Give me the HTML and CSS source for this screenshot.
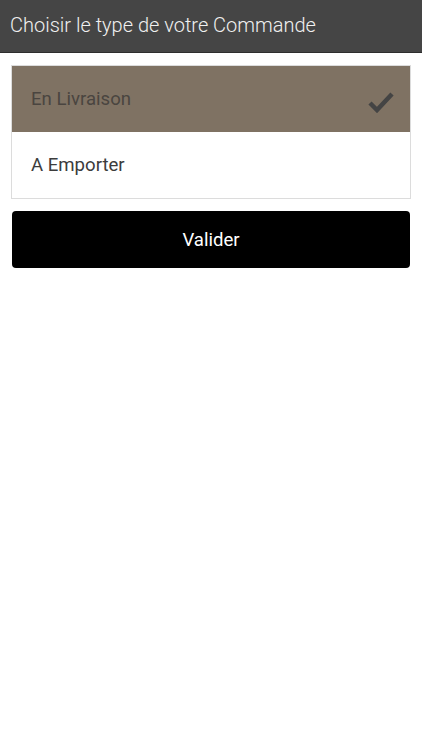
FILE: index.html
```html
<!doctype html>
<html>
	<head>
		<meta charset="utf-8">
		<title>Type de commande</title>
		<link rel="stylesheet" href="styles.css">
	</head>
	<body>
		<div id="header">
			<p id="title">Choisir le type de votre Commande</p>
		</div>
		<div id="content">
			<div id="choices">
				<div class="choice selected">
					<span>En Livraison</span>
					<svg class="check" width="26" height="22" viewBox="0 0 26 22"><path d="M2 12 L9 19 L24 3" fill="none" stroke="#444" stroke-width="4.5"/></svg>
				</div>
				<div class="choice">
					<span>A Emporter</span>
				</div>
			</div>
			<div id="valider">Valider</div>
		</div>
	</body>
</html>
```
FILE: styles.css
```css
*{
	margin:0;
	padding:0;
	box-sizing:border-box;
}
body{
	width:422px;
	height:750px;
	background-color:white;
	font-family:Roboto, "Liberation Sans", sans-serif;
}
#header{
	height:53px;
	background-color:#454545;
	border-bottom:1px solid #2e2e2e;
	display:flex;
	align-items:center;
	padding-left:10px;
}
#title{
	font-size:20px;
	font-weight:300;
	color:#f0f0f0;
	padding-bottom:3px;
}
#content{
	padding:12px 11px 0 11px;
	display:flex;
	flex-direction:column;
	gap:12px;
}
#choices{
	border:1px solid #dcdcdc;
}
.choice{
	height:66px;
	display:flex;
	align-items:center;
	justify-content:space-between;
	padding:0 16px 0 19px;
	font-size:18.6px;
	color:#3c3c3c;
}
.choice.selected{
	background-color:#7f7263;
	color:#4a4540;
}
.check{
	margin-top:6px;
}
#valider{
	margin:0 1px;
	height:57px;
	background-color:black;
	border-radius:4px;
	color:white;
	font-size:18.6px;
	display:flex;
	align-items:center;
	justify-content:center;
}
```
